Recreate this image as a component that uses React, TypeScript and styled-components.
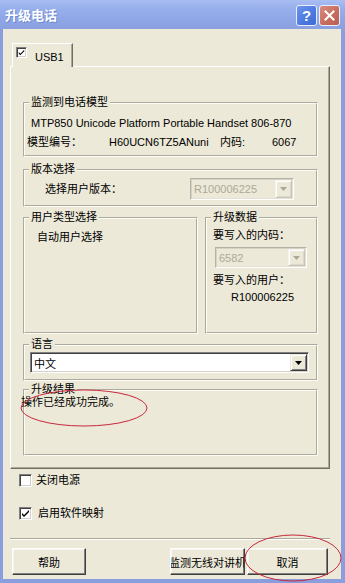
import React from "react";
import styled, { createGlobalStyle } from "styled-components";

const Global = createGlobalStyle`
  html, body { margin: 0; padding: 0; background: #ffffff; }
  body {
    font-family: "Liberation Sans", "Noto Sans CJK SC", sans-serif;
    font-size: 11px;
    color: #000;
  }
  * { box-sizing: border-box; }
`;

const Window = styled.div`
  position: relative;
  width: 345px;
  height: 583px;
  display: flex;
  flex-direction: column;
  background: #8a9ddc;
`;

const TitleBar = styled.div`
  height: 29px;
  flex: none;
  display: flex;
  align-items: center;
  padding: 0 5px 0 5px;
  gap: 2px;
  background: linear-gradient(#a9bdf2 0%, #97afec 30%, #8ea6e6 70%, #8aa0e0 100%);
`;

const Title = styled.div`
  flex: 1;
  color: #fff;
  font-family: "Noto Sans CJK SC", sans-serif;
  font-weight: 700;
  font-size: 13px;
  line-height: 16px;
  text-shadow: 1px 1px 0 #7088cc;
`;

const CaptionButton = styled.div<{ $kind: "help" | "close" }>`
  width: 21px;
  height: 21px;
  margin-top: 1px;
  border: 1px solid #e8eefc;
  border-radius: 3px;
  display: flex;
  align-items: center;
  justify-content: center;
  color: #fff;
  font-family: "Liberation Sans", sans-serif;
  font-weight: 700;
  font-size: 15px;
  background: ${(p) =>
    p.$kind === "help"
      ? "linear-gradient(135deg, #6f95ee 0%, #4a78df 60%, #3f6bd4 100%)"
      : "linear-gradient(135deg, #d98c7e 0%, #c56c5e 60%, #b95e52 100%)"};
`;

const Body = styled.div`
  flex: 1;
  margin: 0 4px 4px 3px;
  background: #ece9d8;
  padding: 14px 11px 0 7px;
  display: flex;
  flex-direction: column;
`;

const TabStrip = styled.div`
  display: flex;
  padding-left: 2px;
`;

const Tab = styled.div`
  position: relative;
  z-index: 1;
  width: 61px;
  height: 24px;
  margin-bottom: -1px;
  background: #ece9d8;
  border-top: 1px solid #fff;
  border-left: 1px solid #fff;
  border-right: 1px solid #716f64;
  box-shadow: inset -1px 0 0 #aca899;
  display: flex;
  align-items: flex-start;
  padding: 3px 0 0 3px;
  gap: 8px;
`;

const TabLabel = styled.span`
  padding-top: 4px;
  line-height: 13px;
  font-size: 11px;
`;

const Panel = styled.div`
  height: 403px;
  border-top: 1px solid #fff;
  border-left: 1px solid #fff;
  border-right: 1px solid #716f64;
  border-bottom: 1px solid #716f64;
  box-shadow: inset -1px -1px 0 #aca899;
  padding: 29px 11px 0 12px;
  display: flex;
  flex-direction: column;
`;

const Group = styled.fieldset<{ $h: number; $mt?: number; $w?: number }>`
  margin: ${(p) => p.$mt ?? 0}px 0 0 0;
  padding: 0;
  min-width: 0;
  height: ${(p) => p.$h}px;
  width: ${(p) => (p.$w ? `${p.$w}px` : "auto")};
  border: 2px groove #fffdf2;
  display: flex;
  flex-direction: column;
`;

const Legend = styled.legend`
  margin-left: 4px;
  padding: 0 2px;
  font-size: 11px;
  line-height: 13px;
`;

const Line = styled.div<{ $mt?: number; $ml?: number; $muted?: boolean }>`
  margin-top: ${(p) => p.$mt ?? 0}px;
  margin-left: ${(p) => p.$ml ?? 0}px;
  line-height: 13px;
  font-size: 11px;
  white-space: nowrap;
  color: ${(p) => (p.$muted ? "#aca899" : "#000")};
`;

const InfoGrid = styled.div`
  margin-top: 6px;
  margin-left: 2px;
  display: grid;
  grid-template-columns: 82px 111px 52px auto;
  line-height: 13px;
  font-size: 11px;
  white-space: nowrap;
`;

const FieldRow = styled.div<{ $mt?: number; $pl?: number }>`
  display: flex;
  align-items: center;
  margin-top: ${(p) => p.$mt ?? 0}px;
  padding-left: ${(p) => p.$pl ?? 0}px;
`;

const FieldLabel = styled.span<{ $w: number }>`
  width: ${(p) => p.$w}px;
  flex: none;
  line-height: 13px;
`;

const GroupRow = styled.div`
  display: flex;
  gap: 7px;
  margin-top: 4px;
`;

const Combo = styled.div<{ $w: number; $h: number; $disabled?: boolean; $ml?: number; $mt?: number }>`
  width: ${(p) => p.$w}px;
  height: ${(p) => p.$h}px;
  margin-left: ${(p) => p.$ml ?? 0}px;
  margin-top: ${(p) => p.$mt ?? 0}px;
  flex: none;
  display: flex;
  align-items: stretch;
  background: ${(p) => (p.$disabled ? "#ece9d8" : "#ffffff")};
  border-top: 1px solid ${(p) => (p.$disabled ? "#b4b2a6" : "#808080")};
  border-left: 1px solid ${(p) => (p.$disabled ? "#b4b2a6" : "#808080")};
  border-bottom: 1px solid #ffffff;
  border-right: 1px solid #ffffff;
  box-shadow: ${(p) =>
    p.$disabled
      ? "inset 1px 1px 0 #d6d3c6, inset -1px -1px 0 #e4e1d4"
      : "inset 1px 1px 0 #404040, inset -1px -1px 0 #d4d0c8"};
  padding: 1px;
`;

const ComboText = styled.span<{ $disabled?: boolean }>`
  flex: 1;
  display: flex;
  align-items: center;
  padding-left: 2px;
  font-size: 11px;
  color: ${(p) => (p.$disabled ? "#aca899" : "#000")};
  white-space: nowrap;
  overflow: hidden;
`;

const ComboButton = styled.span<{ $disabled?: boolean }>`
  width: 17px;
  flex: none;
  display: flex;
  align-items: center;
  justify-content: center;
  background: #ece9d8;
  border-top: 1px solid ${(p) => (p.$disabled ? "#f4f3ee" : "#ece9d8")};
  border-left: 1px solid ${(p) => (p.$disabled ? "#f4f3ee" : "#ece9d8")};
  border-right: 1px solid ${(p) => (p.$disabled ? "#c9c6b8" : "#404040")};
  border-bottom: 1px solid ${(p) => (p.$disabled ? "#c9c6b8" : "#404040")};
  box-shadow: ${(p) =>
    p.$disabled
      ? "inset 1px 1px 0 #ffffff, inset -1px -1px 0 #dcd9cc"
      : "inset 1px 1px 0 #ffffff, inset -1px -1px 0 #808080"};
`;

const CheckRow = styled.div<{ $mt: number; $gap: number }>`
  display: flex;
  align-items: center;
  gap: ${(p) => p.$gap}px;
  margin-top: ${(p) => p.$mt}px;
  margin-left: 9px;
  line-height: 13px;
`;

const CheckBox = styled.span<{ $size: number }>`
  width: ${(p) => p.$size}px;
  height: ${(p) => p.$size}px;
  flex: none;
  background: #fff;
  border-top: 1px solid #808080;
  border-left: 1px solid #808080;
  border-bottom: 1px solid #ffffff;
  border-right: 1px solid #ffffff;
  box-shadow: inset 1px 1px 0 #404040, inset -1px -1px 0 #d4d0c8;
  display: flex;
  align-items: center;
  justify-content: center;
`;

const Separator = styled.div`
  margin-top: 18px;
  height: 2px;
  border-top: 1px solid #aca899;
  border-bottom: 1px solid #ffffff;
`;

const ButtonRow = styled.div`
  display: flex;
  gap: 2px;
  margin-top: 8px;
  padding: 0 2px 0 2px;
`;

const PushButton = styled.div<{ $w: number; $auto?: boolean }>`
  width: ${(p) => p.$w}px;
  height: 27px;
  margin-left: ${(p) => (p.$auto ? "auto" : "0")};
  background: #ece9d8;
  border-top: 1px solid #ffffff;
  border-left: 1px solid #ffffff;
  border-right: 1px solid #404040;
  border-bottom: 1px solid #404040;
  box-shadow: inset -1px -1px 0 #808080, inset 1px 1px 0 #f7f6f0;
  display: flex;
  align-items: center;
  justify-content: center;
  overflow: hidden;
  white-space: nowrap;
  font-size: 11px;
`;

const Overlay = styled.svg`
  position: absolute;
  left: 0;
  top: 0;
  pointer-events: none;
`;

const Arrow = ({ color }: { color: string }) => (
  <svg width="7" height="4" viewBox="0 0 7 4">
    <path d="M0 0h7L3.5 4z" fill={color} />
  </svg>
);

const Check = ({ size }: { size: number }) => (
  <svg width={size} height={size} viewBox="0 0 9 9">
    <path d="M1 4l2 2 5-5v2l-5 5-2-2z" fill="#000" />
  </svg>
);

const CloseGlyph = () => (
  <svg width="11" height="11" viewBox="0 0 11 11">
    <path d="M1.5 1.5l8 8M9.5 1.5l-8 8" stroke="#fff" strokeWidth="2" strokeLinecap="square" />
  </svg>
);

export default function App() {
  return (
    <>
      <Global />
      <Window>
        <TitleBar>
          <Title>升级电话</Title>
          <CaptionButton $kind="help">?</CaptionButton>
          <CaptionButton $kind="close">
            <CloseGlyph />
          </CaptionButton>
        </TitleBar>
        <Body>
          <TabStrip>
            <Tab>
              <CheckBox $size={11}>
                <Check size={7} />
              </CheckBox>
              <TabLabel>USB1</TabLabel>
            </Tab>
          </TabStrip>
          <Panel>
            <Group $h={61}>
              <Legend>监测到电话模型</Legend>
              <Line $mt={8} $ml={6}>
                MTP850 Unicode Platform Portable Handset 806-870
              </Line>
              <InfoGrid>
                <span>模型编号：</span>
                <span>H60UCN6TZ5ANuni</span>
                <span>内码:</span>
                <span>6067</span>
              </InfoGrid>
            </Group>

            <Group $h={44} $mt={6}>
              <Legend>版本选择</Legend>
              <FieldRow $mt={2} $pl={20}>
                <FieldLabel $w={145}>选择用户版本：</FieldLabel>
                <Combo $w={104} $h={22} $disabled>
                  <ComboText $disabled>R100006225</ComboText>
                  <ComboButton $disabled>
                    <Arrow color="#aca899" />
                  </ComboButton>
                </Combo>
              </FieldRow>
            </Group>

            <GroupRow>
              <Group $h={123} $w={175}>
                <Legend>用户类型选择</Legend>
                <Line $mt={7} $ml={12}>
                  自动用户选择
                </Line>
              </Group>
              <Group $h={123} $w={113}>
                <Legend>升级数据</Legend>
                <Line $mt={5} $ml={6}>
                  要写入的内码：
                </Line>
                <Combo $w={92} $h={21} $disabled $ml={8} $mt={5}>
                  <ComboText $disabled>6582</ComboText>
                  <ComboButton $disabled>
                    <Arrow color="#aca899" />
                  </ComboButton>
                </Combo>
                <Line $mt={6} $ml={6}>
                  要写入的用户：
                </Line>
                <Line $mt={4} $ml={24}>
                  R100006225
                </Line>
              </Group>
            </GroupRow>

            <Group $h={43} $mt={4}>
              <Legend>语言</Legend>
              <Combo $w={279} $h={21} $ml={5} $mt={1}>
                <ComboText>中文</ComboText>
                <ComboButton>
                  <Arrow color="#000" />
                </ComboButton>
              </Combo>
            </Group>

            <Group $h={73} $mt={2}>
              <Legend>升级结果</Legend>
              <Line $mt={0} $ml={-4}>
                操作已经成功完成。
              </Line>
            </Group>
          </Panel>

          <CheckRow $mt={5} $gap={4}>
            <CheckBox $size={13} />
            <span>关闭电源</span>
          </CheckRow>
          <CheckRow $mt={20} $gap={6}>
            <CheckBox $size={13}>
              <Check size={9} />
            </CheckBox>
            <span>启用软件映射</span>
          </CheckRow>

          <Separator />

          <ButtonRow>
            <PushButton $w={74}>帮助</PushButton>
            <PushButton $w={75} $auto>
              监测无线对讲机
            </PushButton>
            <PushButton $w={81}>取消</PushButton>
          </ButtonRow>
        </Body>
        <Overlay width="345" height="583" viewBox="0 0 345 583">
          <ellipse cx="84" cy="408" rx="63" ry="18" fill="none" stroke="#c8283a" strokeWidth="1" />
          <ellipse cx="293" cy="558" rx="48" ry="23" fill="none" stroke="#c8283a" strokeWidth="1" />
        </Overlay>
      </Window>
    </>
  );
}
